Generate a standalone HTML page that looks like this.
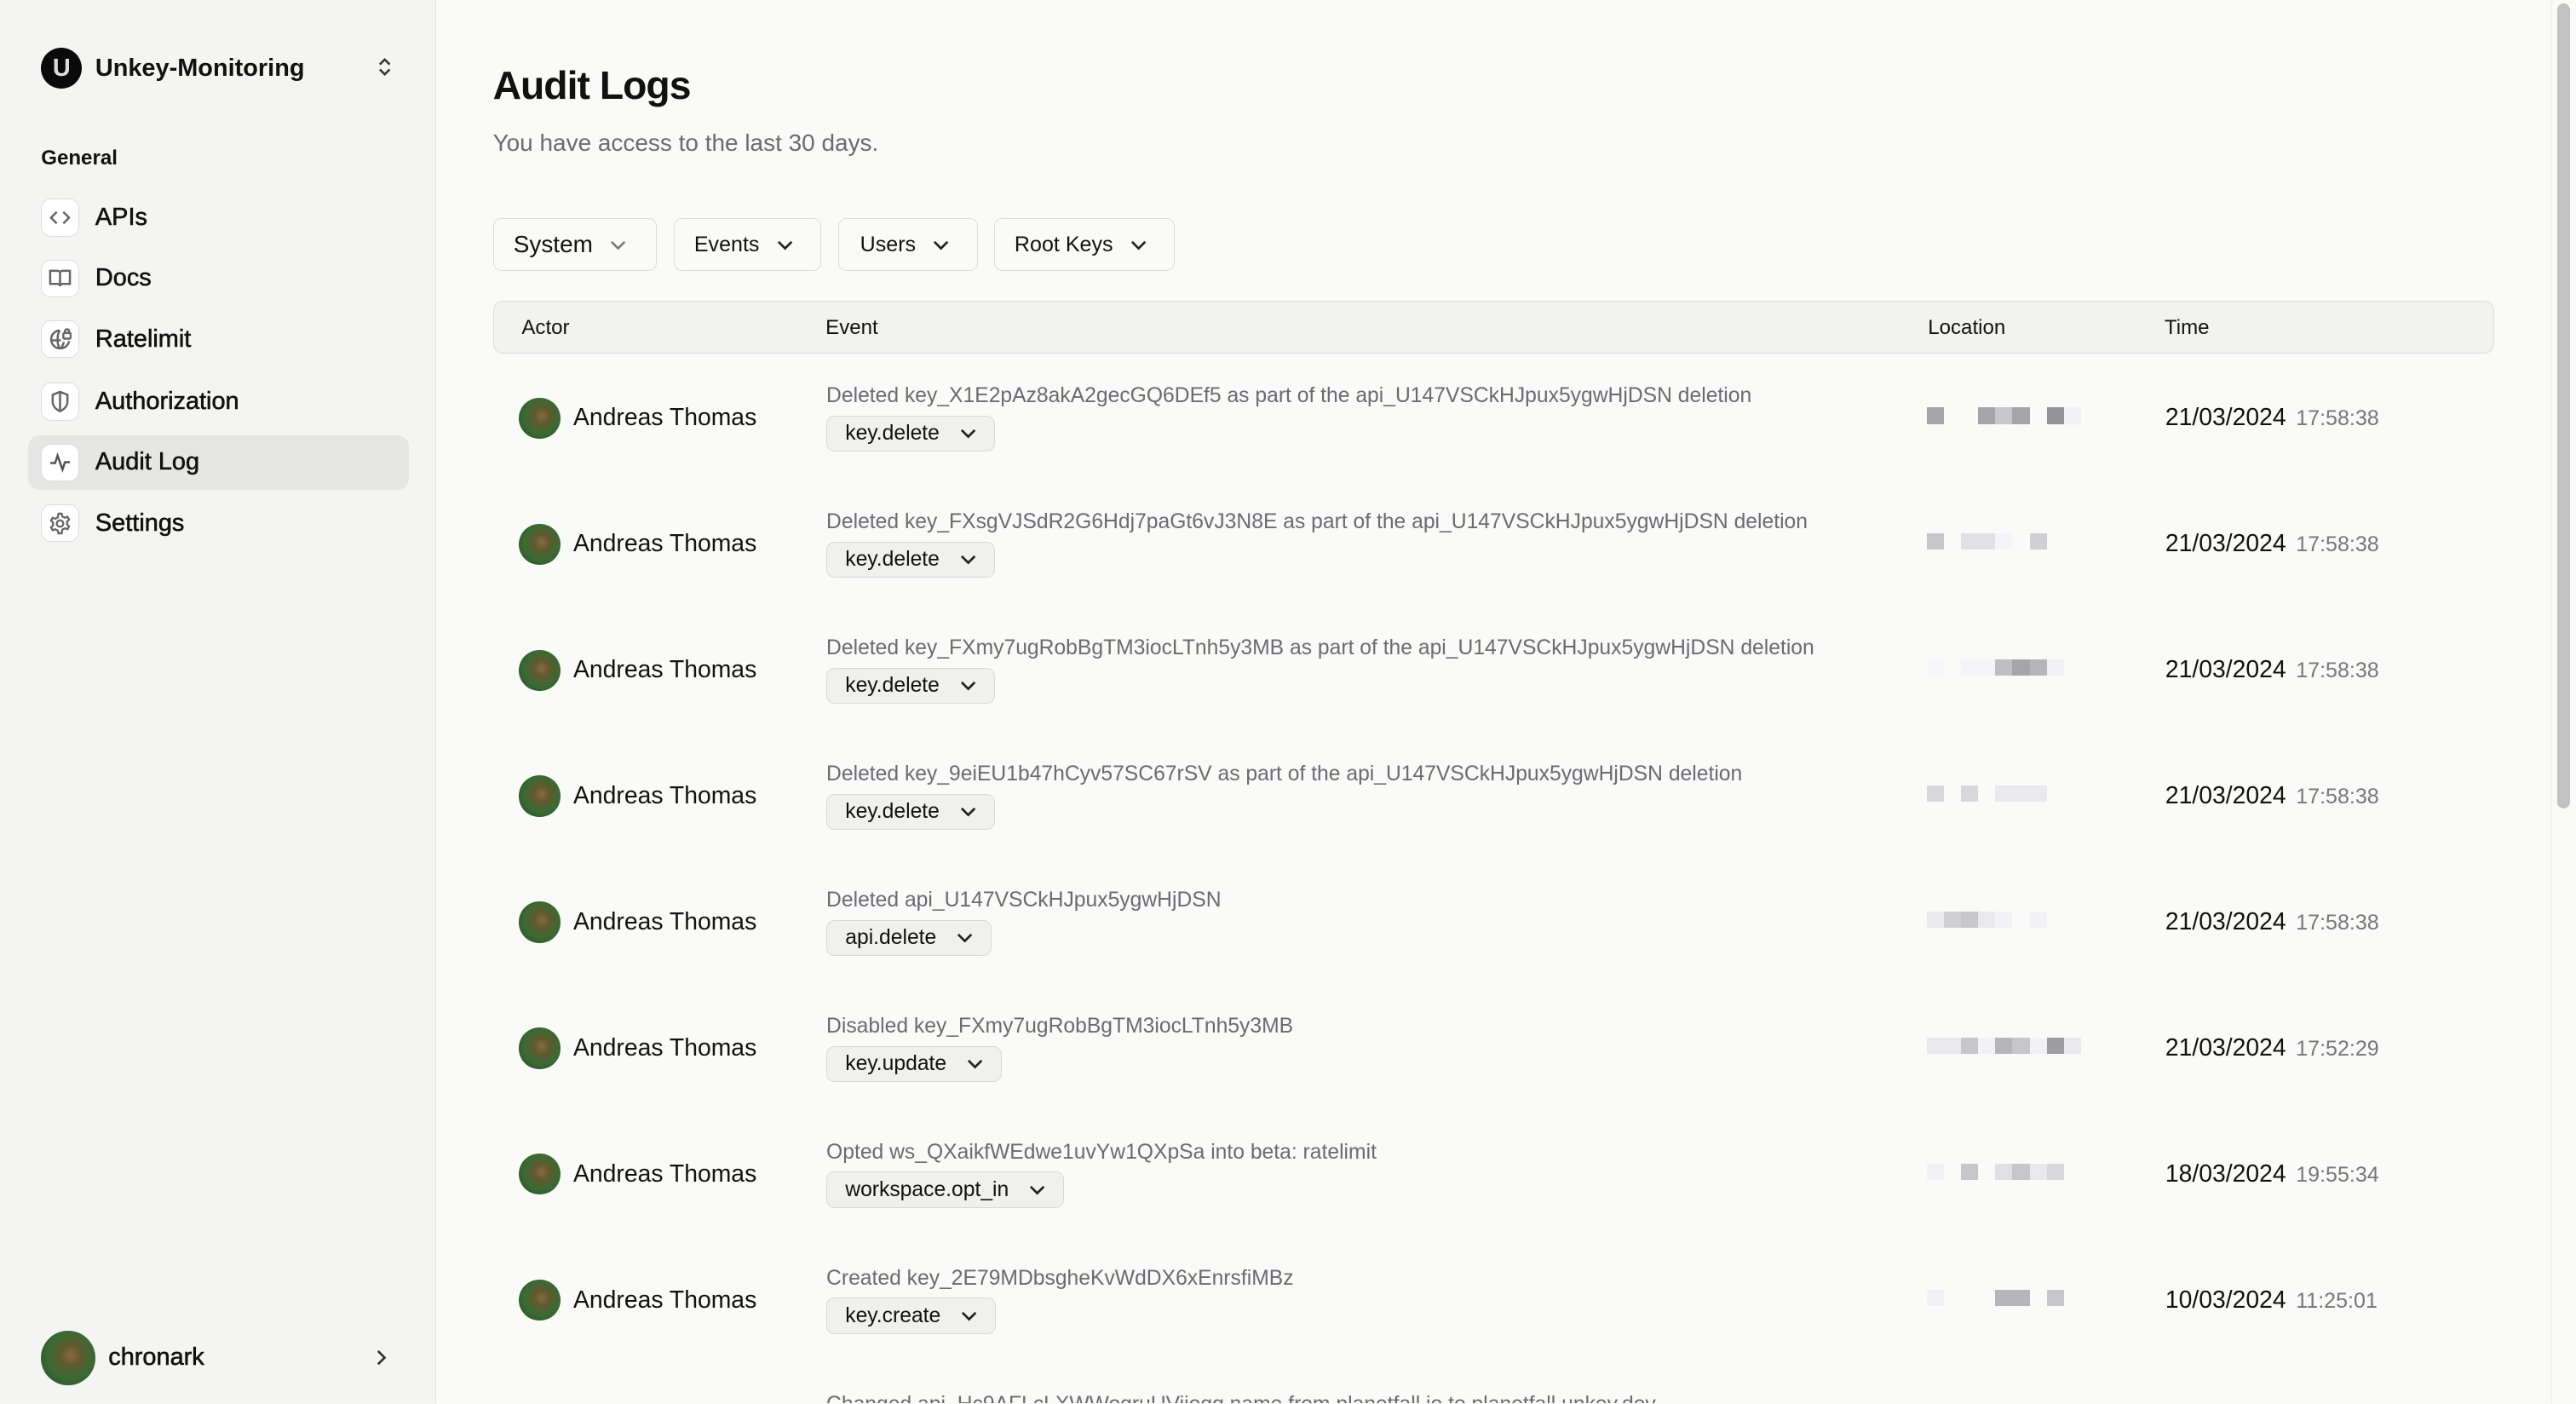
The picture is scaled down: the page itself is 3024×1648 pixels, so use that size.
<!DOCTYPE html>
<html><head><meta charset="utf-8"><style>
html,body{margin:0;padding:0;width:3024px;height:1648px;overflow:hidden;background:#fafaf9}
#r{zoom:1.928571;width:1568px;height:854px;overflow:hidden;position:relative;font-family:"Liberation Sans",sans-serif;color:#111}
.sb{position:absolute;left:0;top:0;width:265px;height:855px;background:#f4f4f3;border-right:1px solid #e3e3e1}
.ws{position:absolute;left:25px;top:29px;display:flex;align-items:center}
.logo{width:25px;height:25px;border-radius:50%;background:#0a0a0a;color:#ddd;font-weight:bold;font-size:15px;display:flex;align-items:center;justify-content:center}
.wsn{margin-left:8px;font-weight:bold;font-size:15px}
.gen{position:absolute;left:25px;top:89px;font-size:12.5px;font-weight:bold}
.nav{position:absolute;left:17px;width:232px;height:33px;display:flex;align-items:center;border-radius:7px}
.nav.act{background:#e6e6e4}
.ic{margin-left:8px;width:22px;height:22px;border:1px solid #ddd;border-radius:6px;background:#fff;display:flex;align-items:center;justify-content:center}
.nav span{margin-left:10px;font-size:15px;-webkit-text-stroke:0.3px #111}
.user{position:absolute;left:25px;top:810px;display:flex;align-items:center;width:215px}
.av{border-radius:50%;background:radial-gradient(circle at 55% 45%,#8a6a3e 0,#5e5a2e 25%,#3a6a34 55%,#234a23 100%)}
h1{position:absolute;left:300px;top:38px;margin:0;font-size:24px;font-weight:bold;letter-spacing:-0.5px}
.sub{position:absolute;left:300px;top:79px;font-size:14.5px;color:#6b6b70}
.fb{position:absolute;top:133px;height:31px;border:1px solid #dcdcdc;border-radius:5px;background:#fafaf9;display:flex;align-items:center;font-size:13px}
.fb svg{margin-left:10px}
.th{position:absolute;left:300px;top:183px;width:1217px;height:31px;border:1px solid #dcdcdc;border-radius:6px;background:#f2f2f1;font-size:12.5px}
.th div{position:absolute;top:9px}
.row{position:absolute;left:300px;width:1217px;height:77px}
.row .a{position:absolute;left:16px;top:26px;display:flex;align-items:center;font-size:14.7px}
.row .e{position:absolute;left:203px;top:18px;font-size:12.8px;color:#6b6b70;white-space:nowrap}
.bd{position:absolute;left:203px;top:37px;height:21px;border:1px solid #d8d8d8;border-radius:5px;background:#f0f0ef;display:flex;align-items:center;padding:0 10px 0 11px;font-size:12.8px;color:#111}
.bd svg{margin-left:12px}
.row .t{position:absolute;left:1018px;top:30px;font-size:14.7px}
.row .t small{font-size:13px;color:#77777c;margin-left:6px}
.loc{position:absolute;left:873px;top:32px;width:104px;height:11px}
.loc i{position:absolute;top:0;width:10.4px;height:10px}
.scroll{position:absolute;left:1553px;top:0;width:15px;height:855px;background:#fafaf9;border-left:1px solid #ececec}
.thumb{position:absolute;left:3px;top:2px;width:8px;height:490px;border-radius:4px;background:#c2c2c2}
</style></head><body><div id="r">
<div class="sb">
 <div class="ws"><div class="logo">U</div><div class="wsn">Unkey-Monitoring</div></div>
 <svg style="position:absolute;left:229px;top:35px" width="10" height="12" viewBox="0 0 10 12" fill="none" stroke="#333" stroke-width="1.3"><path d="M2 4.5L5 1.5L8 4.5M2 7.5L5 10.5L8 7.5"/></svg>
 <div class="gen">General</div>
 <div class="nav" style="top:116px"><div class="ic"><svg width="14" height="14" viewBox="0 0 14 14" fill="none" stroke="#666" stroke-width="1.3"><path d="M5 3.5L1.5 7L5 10.5M9 3.5L12.5 7L9 10.5"/></svg></div><span>APIs</span></div>
 <div class="nav" style="top:153px"><div class="ic"><svg width="14" height="14" viewBox="0 0 14 14" fill="none" stroke="#666" stroke-width="1.3"><path d="M1 2.5h4.5a1.5 1.5 0 0 1 1.5 1.5v8a1.5 1.5 0 0 0-1.5-1.5H1zM13 2.5H8.5A1.5 1.5 0 0 0 7 4v8a1.5 1.5 0 0 1 1.5-1.5H13z"/></svg></div><span>Docs</span></div>
 <div class="nav" style="top:190px"><div class="ic"><svg width="14" height="14" viewBox="0 0 14 14" fill="none" stroke="#666" stroke-width="1.3"><path d="M12.5 8A5.5 5.5 0 1 1 6.5 1.5M1.5 7.5h6M7 1.5c-2 2-2 9 0 11M7 12.5c1.5-1 2-2.5 2.2-4"/><rect x="9" y="3" width="4.5" height="3.5" rx="0.8"/><path d="M10 3V2a1.2 1.2 0 0 1 2.5 0v1"/></svg></div><span>Ratelimit</span></div>
 <div class="nav" style="top:228px"><div class="ic"><svg width="14" height="14" viewBox="0 0 14 14" fill="none" stroke="#666" stroke-width="1.3"><path d="M7 1L2.5 2.8v4c0 3 2.2 5 4.5 6 2.3-1 4.5-3 4.5-6v-4zM7 1v12"/></svg></div><span>Authorization</span></div>
 <div class="nav act" style="top:265px"><div class="ic"><svg width="14" height="14" viewBox="0 0 14 14" fill="none" stroke="#555" stroke-width="1.3"><path d="M1 7.5h3L5.5 3l3 8.5L10 7h3"/></svg></div><span>Audit Log</span></div>
 <div class="nav" style="top:302px"><div class="ic"><svg width="14" height="14" viewBox="0 0 14 14" fill="none" stroke="#666" stroke-width="1.2"><circle cx="7" cy="7" r="2"/><path d="M6 1h2l.4 1.7 1.5.8 1.6-.6 1 1.7-1.2 1.2v1.8l1.2 1.2-1 1.7-1.6-.6-1.5.8L8 13H6l-.4-1.7-1.5-.8-1.6.6-1-1.7L2.7 8.2V6.4L1.5 5.2l1-1.7 1.6.6 1.5-.8z"/></svg></div><span>Settings</span></div>
 <div class="user"><div class="av" style="width:33px;height:33px"></div><span style="margin-left:8px;font-size:15px;-webkit-text-stroke:0.3px #111">chronark</span>
 <svg style="position:absolute;left:202px" width="10" height="12" viewBox="0 0 10 12" fill="none" stroke="#333" stroke-width="1.4"><path d="M3 2l4 4-4 4"/></svg></div>
</div>
<h1>Audit Logs</h1>
<div class="sub">You have access to the last 30 days.</div>
<div class="fb" style="left:300px;width:99px"><span style="margin-left:12px;font-size:14.5px">System</span><svg width="11" height="8" viewBox="0 0 11 8" fill="none" stroke="#777" stroke-width="1.3"><path d="M1.5 2l4 4 4-4"/></svg></div>
<div class="fb" style="left:410px;width:89px"><span style="margin-left:12px">Events</span><svg width="11" height="8" viewBox="0 0 11 8" fill="none" stroke="#222" stroke-width="1.4"><path d="M1.5 2l4 4 4-4"/></svg></div>
<div class="fb" style="left:510px;width:84px"><span style="margin-left:13px">Users</span><svg width="11" height="8" viewBox="0 0 11 8" fill="none" stroke="#222" stroke-width="1.4"><path d="M1.5 2l4 4 4-4"/></svg></div>
<div class="fb" style="left:605px;width:109px"><span style="margin-left:12px">Root Keys</span><svg width="11" height="8" viewBox="0 0 11 8" fill="none" stroke="#222" stroke-width="1.4"><path d="M1.5 2l4 4 4-4"/></svg></div>
<div class="th"><div style="left:17px">Actor</div><div style="left:202px">Event</div><div style="left:873px">Location</div><div style="left:1017px">Time</div></div>

<div id="rows"></div>
<div class="scroll"><div class="thumb"></div></div>
</div>
<script>
var d=[
["Deleted key_X1E2pAz8akA2gecGQ6DEf5 as part of the api_U147VSCkHJpux5ygwHjDSN deletion","key.delete","21/03/2024","17:58:38"],
["Deleted key_FXsgVJSdR2G6Hdj7paGt6vJ3N8E as part of the api_U147VSCkHJpux5ygwHjDSN deletion","key.delete","21/03/2024","17:58:38"],
["Deleted key_FXmy7ugRobBgTM3iocLTnh5y3MB as part of the api_U147VSCkHJpux5ygwHjDSN deletion","key.delete","21/03/2024","17:58:38"],
["Deleted key_9eiEU1b47hCyv57SC67rSV as part of the api_U147VSCkHJpux5ygwHjDSN deletion","key.delete","21/03/2024","17:58:38"],
["Deleted api_U147VSCkHJpux5ygwHjDSN","api.delete","21/03/2024","17:58:38"],
["Disabled key_FXmy7ugRobBgTM3iocLTnh5y3MB","key.update","21/03/2024","17:52:29"],
["Opted ws_QXaikfWEdwe1uvYw1QXpSa into beta: ratelimit","workspace.opt_in","18/03/2024","19:55:34"],
["Created key_2E79MDbsgheKvWdDX6xEnrsfiMBz","key.create","10/03/2024","11:25:01"],
["Changed api_Hc9AFLcLXWWoqruUViiogg name from planetfall.io to planetfall.unkey.dev","api.update","09/03/2024","10:01:12"]];
var locs=[[.5,0,0,.5,.3,.5,0,.6,.05],[.3,0,.15,.15,.03,0,.25,0],[.02,0,.03,.03,.35,.5,.4,.05],[.2,0,.2,0,.1,.1,.1,0],[.1,.25,.3,.1,.05,0,.05,0],[.1,.1,.3,.05,.4,.3,.05,.55,.1],[.05,0,.3,0,.15,.3,.1,.2],[.05,0,0,0,.4,.4,0,.3],[0,0,0,0,0,0,0,0]];
var h="";
d.forEach(function(r,i){
 var top=216+i*76.7,l="";
 locs[i].forEach(function(v,j){if(v>0){var c=Math.round(250-v*170);l+='<i style="left:'+(j*10.4)+'px;background:rgb('+c+','+c+','+(c+4)+')"></i>';}});
 h+='<div class="row" style="top:'+top+'px"><div class="a"><div class="av" style="width:25px;height:25px"></div><span style="margin-left:8px">Andreas Thomas</span></div><div class="e">'+r[0]+'</div><div class="bd">'+r[1]+'<svg width="11" height="8" viewBox="0 0 11 8" fill="none" stroke="#222" stroke-width="1.4"><path d="M1.5 2l4 4 4-4"/></svg></div><div class="loc">'+l+'</div><div class="t">'+r[2]+'<small>'+r[3]+'</small></div></div>';
});
document.getElementById("rows").innerHTML=h;
</script>
</body></html>
